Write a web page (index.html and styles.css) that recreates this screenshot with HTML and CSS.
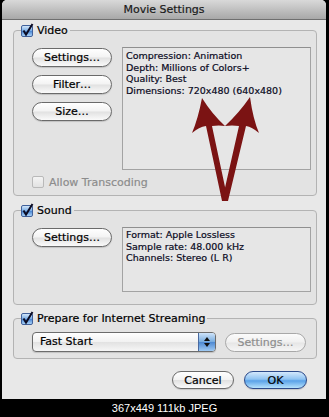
FILE: index.html
```html
<!DOCTYPE html>
<html lang="en">
<head>
    <meta charset="UTF-8">
    <meta name="viewport" content="width=device-width, initial-scale=1.0">
    <title>Movie Settings</title>
    <link rel="stylesheet" href="styles.css">
</head>
<body>
    <div class="window">
        <div class="titlebar">Movie Settings</div>
        <div class="panel">
            <fieldset class="group group-video">
                <legend>
                    <span class="check on"><svg width="12" height="12" viewBox="0 0 12 12"><path d="M2.5 5.5 L5 9.5 L11.5 -1" /></svg></span>
                    Video
                </legend>
                <div class="group-row">
                    <div class="btn-col">
                        <button class="btn">Settings…</button>
                        <button class="btn">Filter…</button>
                        <button class="btn">Size…</button>
                    </div>
                    <div class="info info-video">
                        Compression: Animation<br>
                        Depth: Millions of Colors+<br>
                        Quality: Best<br>
                        Dimensions: 720x480 (640x480)
                    </div>
                </div>
                <div class="option disabled">
                    <span class="check off"></span>
                    Allow Transcoding
                </div>
            </fieldset>

            <fieldset class="group group-sound">
                <legend>
                    <span class="check on"><svg width="12" height="12" viewBox="0 0 12 12"><path d="M2.5 5.5 L5 9.5 L11.5 -1" /></svg></span>
                    Sound
                </legend>
                <div class="group-row">
                    <div class="btn-col">
                        <button class="btn">Settings…</button>
                    </div>
                    <div class="info info-sound">
                        Format: Apple Lossless<br>
                        Sample rate: 48.000 kHz<br>
                        Channels: Stereo (L R)
                    </div>
                </div>
            </fieldset>

            <fieldset class="group group-stream">
                <legend>
                    <span class="check on"><svg width="12" height="12" viewBox="0 0 12 12"><path d="M2.5 5.5 L5 9.5 L11.5 -1" /></svg></span>
                    Prepare for Internet Streaming
                </legend>
                <div class="stream-row">
                    <div class="popup">
                        <span class="popup-label">Fast Start</span>
                        <span class="popup-arrows">
                            <svg width="8" height="12" viewBox="0 0 8 12"><path d="M4 1 L7 5 L1 5 Z M1 7 L7 7 L4 11 Z" /></svg>
                        </span>
                    </div>
                    <button class="btn btn-disabled">Settings…</button>
                </div>
            </fieldset>

            <div class="actions">
                <button class="btn btn-cancel">Cancel</button>
                <button class="btn btn-default">OK</button>
            </div>
        </div>

        <svg class="annotation" width="324" height="399" viewBox="2 0 324 399">
            <path d="M202 98 Q198 119 192 133 Q199 127 206 126 L222 201 L228 201 L212 126 Q219 125 225 126 Q212 114 202 98 Z" />
            <path d="M250 97 Q253 119 259 133 Q252 127 246 126 L228 201 L222 201 L239 126 Q232 125 225 126 Q239 113 250 97 Z" />
        </svg>
    </div>
    <div class="caption">367x449 111kb JPEG</div>
</body>
</html>
```

FILE: styles.css
```css
* {
    margin: 0;
    padding: 0;
    box-sizing: border-box;
}

html, body {
    width: 329px;
    height: 417px;
    overflow: hidden;
    background-color: #000;
    font-family: "DejaVu Sans", sans-serif;
}

.window {
    position: relative;
    margin-left: 2px;
    width: 324px;
    height: 399px;
    background-color: #e8e8e8;
    border-radius: 5px 5px 0 0;
    overflow: hidden;
    -webkit-text-stroke: 0.2px currentColor;
}

.titlebar {
    height: 20px;
    line-height: 19px;
    text-align: center;
    font-size: 11px;
    color: #1a1a1a;
    background: linear-gradient(#d9d9d9, #a8a8a8);
    border-bottom: 1px solid #6f6f6f;
}

.panel {
    padding: 4px 9px 0 11px;
}

.group {
    border: 1px solid #b3b3b3;
    border-radius: 4px;
    background-color: #e3e3e3;
    padding: 10px 5px 7px 18px;
    min-width: 0;
}

.group legend {
    display: flex;
    align-items: center;
    gap: 4px;
    height: 13px;
    margin-left: -11px;
    padding-right: 2px;
    font-size: 11px;
    line-height: 13px;
    color: #000;
}

.group-sound {
    margin-top: 8px;
    padding-bottom: 12px;
}

.group-stream {
    margin-top: 7px;
    padding-top: 7px;
    padding-bottom: 6px;
}

.check {
    display: inline-block;
    width: 12px;
    height: 12px;
    border-radius: 2px;
    flex-shrink: 0;
}

.check.on {
    border: 1px solid #40609a;
    background: linear-gradient(#d2e6fa, #7fb0e6 45%, #4f8ad6 55%, #a8d2f8);
}

.check.on svg {
    display: block;
    margin: -1px 0 0 -1px;
    overflow: visible;
}

.check.on path {
    fill: none;
    stroke: #0c0c24;
    stroke-width: 2;
}

.check.off {
    border: 1px solid #b9b9b9;
    background: linear-gradient(#f4f4f4, #e2e2e2);
}

.group-row {
    display: flex;
    gap: 10px;
}

.btn-col {
    display: flex;
    flex-direction: column;
    gap: 8px;
    padding-top: 1px;
}

.btn {
    display: inline-flex;
    align-items: center;
    justify-content: center;
    width: 80px;
    height: 19px;
    font-family: "DejaVu Sans", sans-serif;
    font-size: 11px;
    color: #000;
    border: 1px solid #6a6a6a;
    border-radius: 10px;
    background: linear-gradient(#ffffff, #f3f3f3 48%, #e1e1e1 52%, #fafafa);
    box-shadow: 0 1px 1px rgba(0, 0, 0, 0.15);
}

.info {
    flex: 1;
    padding: 2px 3px;
    font-size: 9.5px;
    line-height: 11.6px;
    color: #0a0a1e;
    background-color: #e6e6e6;
    border: 1px solid #a3a3a3;
    border-top-color: #8f8f8f;
}

.info-video {
    height: 123px;
}

.info-sound {
    height: 65px;
    padding-top: 1px;
}

.option {
    display: flex;
    align-items: center;
    gap: 5px;
    margin-top: 6px;
    height: 12px;
    font-size: 11px;
}

.option.disabled {
    color: #8c8c8c;
}

.stream-row {
    display: flex;
    align-items: center;
    gap: 9px;
}

.popup {
    display: flex;
    width: 184px;
    height: 20px;
    border: 1px solid #6c6c6c;
    border-radius: 4px;
    overflow: hidden;
    background: linear-gradient(#ffffff, #f2f2f2 48%, #e2e2e2 52%, #f6f6f6);
    box-shadow: 0 1px 1px rgba(0, 0, 0, 0.15);
}

.popup-label {
    flex: 1;
    padding-left: 7px;
    font-size: 11px;
    line-height: 18px;
}

.popup-arrows {
    display: flex;
    align-items: center;
    justify-content: center;
    width: 17px;
    border-left: 1px solid #4a6aa0;
    background: linear-gradient(#cfe4fa, #79addf 48%, #4f8ad3 52%, #9fcaf3);
}

.popup-arrows path {
    fill: #111;
}

.btn-disabled {
    width: 81px;
    color: #8e8e8e;
    border-color: #a8a8a8;
    background: linear-gradient(#fbfbfb, #f0f0f0 48%, #e6e6e6 52%, #f6f6f6);
    box-shadow: none;
}

.actions {
    display: flex;
    justify-content: flex-end;
    gap: 10px;
    margin-top: 12px;
    padding-right: 10px;
}

.actions .btn {
    height: 18px;
}

.btn-cancel {
    width: 62px;
}

.btn-default {
    width: 63px;
    border-color: #2c4a8a;
    background: linear-gradient(#d3e8fc, #8fc3f2 45%, #5aa2e8 55%, #b6e2fc);
}

.annotation {
    position: absolute;
    left: 0;
    top: 0;
}

.annotation path {
    fill: #7b1313;
}

.caption {
    height: 18px;
    line-height: 18px;
    text-align: center;
    font-family: "Liberation Sans", Arial, sans-serif;
    font-size: 11px;
    color: #fff;
}
```
